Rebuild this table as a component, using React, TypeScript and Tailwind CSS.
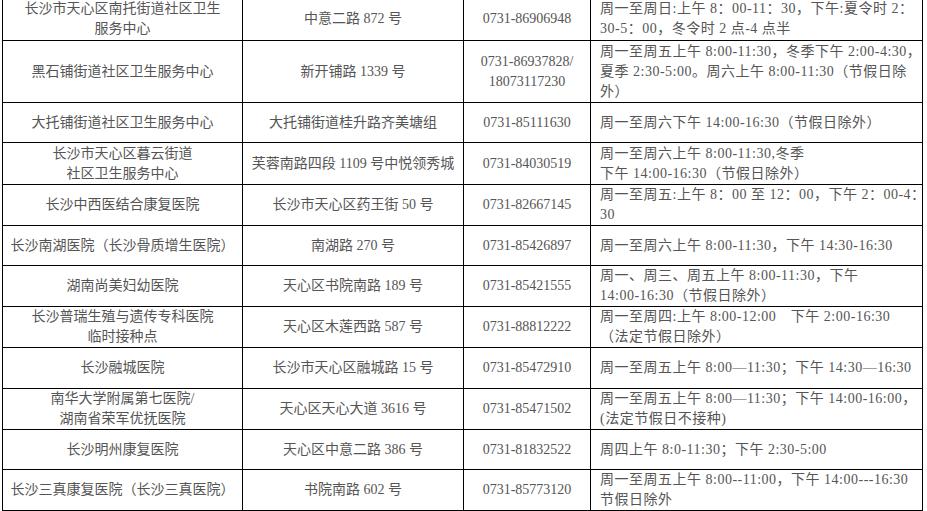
import React from "react"

type Row = {
  h: string
  name: string[]
  addr: string[]
  tel: string[]
  hours: string[]
}

// 接种点一览（天心区）
const rows: Row[] = [
  {
    h: "h-[44px]",
    name: ["长沙市天心区南托街道社区卫生", "服务中心"],
    addr: ["中意二路 872 号"],
    tel: ["0731-86906948"],
    hours: ["周一至周日:上午 8：00-11：30，下午:夏令时 2：", "30-5：00，冬令时 2 点-4 点半"],
  },
  {
    h: "h-[62px]",
    name: ["黑石铺街道社区卫生服务中心"],
    addr: ["新开铺路 1339 号"],
    tel: ["0731-86937828/", "18073117230"],
    hours: [
      "周一至周五上午 8:00-11:30，冬季下午 2:00-4:30，",
      "夏季 2:30-5:00。周六上午 8:00-11:30（节假日除",
      "外）",
    ],
  },
  {
    h: "h-[40px]",
    name: ["大托铺街道社区卫生服务中心"],
    addr: ["大托铺街道桂升路齐美塘组"],
    tel: ["0731-85111630"],
    hours: ["周一至周六下午 14:00-16:30（节假日除外）"],
  },
  {
    h: "h-[42px]",
    name: ["长沙市天心区暮云街道", "社区卫生服务中心"],
    addr: ["芙蓉南路四段 1109 号中悦领秀城"],
    tel: ["0731-84030519"],
    hours: ["周一至周六上午 8:00-11:30,冬季", "下午 14:00-16:30（节假日除外）"],
  },
  {
    h: "h-[40px]",
    name: ["长沙中西医结合康复医院"],
    addr: ["长沙市天心区药王街 50 号"],
    tel: ["0731-82667145"],
    hours: ["周一至周五:上午 8：00 至 12：00，下午 2：00-4：", "30"],
  },
  {
    h: "h-[40px]",
    name: ["长沙南湖医院（长沙骨质增生医院）"],
    addr: ["南湖路 270 号"],
    tel: ["0731-85426897"],
    hours: ["周一至周六上午 8:00-11:30，下午 14:30-16:30"],
  },
  {
    h: "h-[41px]",
    name: ["湖南尚美妇幼医院"],
    addr: ["天心区书院南路 189 号"],
    tel: ["0731-85421555"],
    hours: ["周一、周三、周五上午 8:00-11:30，下午", "14:00-16:30（节假日除外）"],
  },
  {
    h: "h-[41px]",
    name: ["长沙普瑞生殖与遗传专科医院", "临时接种点"],
    addr: ["天心区木莲西路 587 号"],
    tel: ["0731-88812222"],
    hours: ["周一至周四:上午 8:00-12:00　下午 2:00-16:30", "（法定节假日除外）"],
  },
  {
    h: "h-[41px]",
    name: ["长沙融城医院"],
    addr: ["长沙市天心区融城路 15 号"],
    tel: ["0731-85472910"],
    hours: ["周一至周五上午 8:00—11:30；下午 14:30—16:30"],
  },
  {
    h: "h-[40px]",
    name: ["南华大学附属第七医院/", "湖南省荣军优抚医院"],
    addr: ["天心区天心大道 3616 号"],
    tel: ["0731-85471502"],
    hours: ["周一至周五上午 8:00—11:30；下午 14:00-16:00，", "(法定节假日不接种)"],
  },
  {
    h: "h-[40px]",
    name: ["长沙明州康复医院"],
    addr: ["天心区中意二路 386 号"],
    tel: ["0731-81832522"],
    hours: ["周四上午 8:0-11:30；下午 2:30-5:00"],
  },
  {
    h: "h-[40px]",
    name: ["长沙三真康复医院（长沙三真医院）"],
    addr: ["书院南路 602 号"],
    tel: ["0731-85773120"],
    hours: ["周一至周五上午 8:00--11:00，下午 14:00---16:30", "节假日除外"],
  },
]

function Lines({ items }: { items: string[] }) {
  return (
    <>
      {items.map((t, i) => (
        <div key={i} className="whitespace-nowrap">
          {t}
        </div>
      ))}
    </>
  )
}

export default function App() {
  return (
    <div className="w-[927px] h-[511px] overflow-hidden bg-white">
      <table
        className="ml-[2px] -mt-[4px] w-[920px] table-fixed border-collapse text-[14px] leading-[20px] text-[#555555]"
        style={{ fontFamily: '"Liberation Serif", "Noto Sans CJK SC", serif' }}
      >
        <colgroup>
          <col className="w-[240px]" />
          <col className="w-[221px]" />
          <col className="w-[127px]" />
          <col className="w-[332px]" />
        </colgroup>
        <tbody>
          {rows.map((r, i) => (
            <tr key={i} className={r.h}>
              <td className="border border-black p-0 text-center align-middle">
                <Lines items={r.name} />
              </td>
              <td className="border border-black p-0 text-center align-middle">
                <Lines items={r.addr} />
              </td>
              <td className="border border-black p-0 text-center align-middle">
                <Lines items={r.tel} />
              </td>
              <td className="border border-black py-0 pl-[9px] pr-0 text-left align-middle tracking-[0.5px]">
                <Lines items={r.hours} />
              </td>
            </tr>
          ))}
        </tbody>
      </table>
    </div>
  )
}
